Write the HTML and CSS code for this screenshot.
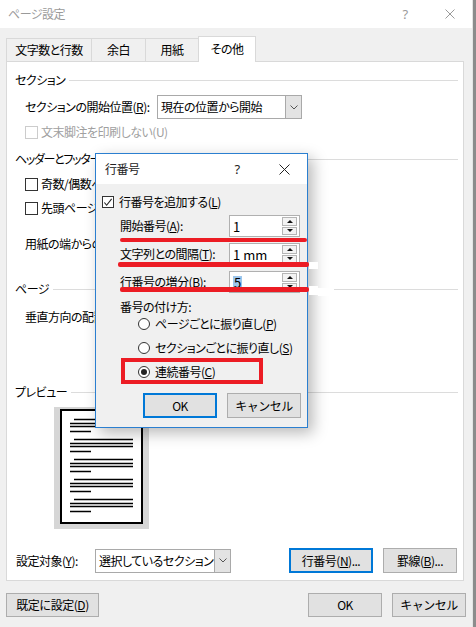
FILE: index.html
```html
<!DOCTYPE html>
<html lang="ja">
<head>
<meta charset="utf-8">
<title>ページ設定</title>
<link rel="stylesheet" href="styles.css">
</head>
<body>
<div class="screen">
  <div class="window">
    <div class="titlebar">
      <span class="title">ページ設定</span>
      <span class="tb-help">?</span>
      <svg class="tb-close" width="10" height="10" viewBox="0 0 10 10"><path d="M0.5 0.5 L9.5 9.5 M9.5 0.5 L0.5 9.5" stroke="#9a9a9a" stroke-width="1" fill="none"/></svg>
    </div>
    <div class="tabs">
      <div class="tab t1">文字数と行数</div>
      <div class="tab t2">余白</div>
      <div class="tab t3">用紙</div>
      <div class="tab t4 active">その他</div>
    </div>
    <div class="panel">
      <div class="group-title gt-section"><span>セクション</span></div>
      <div class="row row-start indent">
        <span class="label w-start">セクションの開始位置(<u>R</u>):</span>
        <div class="select sel-start">
          <span class="sel-text">現在の位置から開始</span>
          <span class="sel-btn"><svg width="8" height="5" viewBox="0 0 8 5"><path d="M0.5 0.5 L4 4 L7.5 0.5" stroke="#555" fill="none"/></svg></span>
        </div>
      </div>
      <div class="row row-cb1 indent disabled">
        <span class="cb cb-disabled"></span><span>文末脚注を印刷しない(U)</span>
      </div>
      <div class="group-title gt-header"><span class="tight">ヘッダーとフッター</span></div>
      <div class="row row-cb2 indent clip">
        <span class="cb"></span><span class="clip-text">奇数/偶数ページ別指定(O)</span>
      </div>
      <div class="row row-cb3 indent clip">
        <span class="cb"></span><span class="clip-text">先頭ページのみ別指定(P)</span>
      </div>
      <div class="row row-edge indent clip">
        <span class="clip-text">用紙の端からの距離:</span>
      </div>
      <div class="group-title gt-page"><span>ページ</span></div>
      <div class="row row-vert indent clip">
        <span class="clip-text">垂直方向の配置(V):</span>
      </div>
      <div class="group-title gt-preview"><span>プレビュー</span></div>
      <div class="preview">
        <svg width="95" height="122" viewBox="0 0 95 122">
          <rect x="7" y="3" width="81" height="113" fill="#fff" stroke="#000" stroke-width="2"/>
          <g stroke="#000" stroke-width="1.4">
            <path d="M20 12.5H79 M16 16.5H79 M16 19.5H79 M16 24.5H37"/>
            <path d="M20 32.5H79 M16 36.5H79 M16 39.5H79 M16 44.5H37"/>
            <path d="M20 52.5H79 M16 56.5H79 M16 59.5H79 M16 64.5H37"/>
            <path d="M20 72.5H79 M16 76.5H79 M16 79.5H79 M16 84.5H37"/>
            <path d="M20 92.5H79 M16 96.5H79 M16 99.5H79 M16 104.5H37"/>
          </g>
        </svg>
      </div>
      <div class="row row-target">
        <span class="label w-target">設定対象(<u>Y</u>):</span>
        <div class="select sel-target">
          <span class="sel-text">選択しているセクション</span>
          <span class="sel-btn"><svg width="8" height="5" viewBox="0 0 8 5"><path d="M0.5 0.5 L4 4 L7.5 0.5" stroke="#555" fill="none"/></svg></span>
        </div>
        <div class="btn-group">
          <button class="btn btn-default btn-lines">行番号(<u>N</u>)...</button>
          <button class="btn btn-border">罫線(<u>B</u>)...</button>
        </div>
      </div>
    </div>
    <div class="footer">
      <button class="btn btn-reset">既定に設定(<u>D</u>)</button>
      <div class="footer-right">
        <button class="btn btn-ok">OK</button>
        <button class="btn btn-cancel">キャンセル</button>
      </div>
    </div>
  </div>
  <div class="edge"></div>

  <div class="subdialog">
    <div class="sub-title">
      <span class="sub-name">行番号</span>
      <span class="sub-help">?</span>
      <svg class="sub-close" width="11" height="11" viewBox="0 0 11 11"><path d="M0.5 0.5 L10.5 10.5 M10.5 0.5 L0.5 10.5" stroke="#222" stroke-width="1" fill="none"/></svg>
    </div>
    <div class="sub-body">
      <div class="srow s-add">
        <span class="cb cb-checked"><svg width="11" height="11" viewBox="0 0 11 11"><path d="M1.5 5.5 L4 8.5 L9.5 1.5" stroke="#222" stroke-width="1.2" fill="none"/></svg></span>
        <span>行番号を追加する(<u>L</u>)</span>
      </div>
      <div class="srow spin-row s-r1">
        <span class="slabel">開始番号(<u>A</u>):</span>
        <div class="spin"><span class="spin-text">1</span><span class="arrows"><span class="arr up"></span><span class="arr down"></span></span></div>
      </div>
      <div class="srow spin-row s-r2">
        <span class="slabel">文字列との間隔(<u>T</u>):</span>
        <div class="spin"><span class="spin-text">1 mm</span><span class="arrows"><span class="arr up"></span><span class="arr down"></span></span></div>
      </div>
      <div class="srow spin-row s-r3">
        <span class="slabel">行番号の増分(<u>B</u>):</span>
        <div class="spin"><span class="spin-text"><span class="sel">5</span></span><span class="arrows"><span class="arr up"></span><span class="arr down"></span></span></div>
      </div>
      <div class="srow s-method"><span>番号の付け方:</span></div>
      <div class="srow radio-row s-p1"><span class="radio"></span><span>ページごとに振り直し(<u>P</u>)</span></div>
      <div class="srow radio-row s-p2"><span class="radio"></span><span>セクションごとに振り直し(<u>S</u>)</span></div>
      <div class="srow radio-row s-p3"><span class="radio on"></span><span>連続番号(<u>C</u>)</span></div>
      <div class="sub-buttons">
        <button class="btn btn-default sbtn">OK</button>
        <button class="btn sbtn">キャンセル</button>
      </div>
    </div>
  </div>

  <div class="red line1"></div>
  <div class="red line2"></div>
  <div class="white patch2"></div>
  <div class="red line3"></div>
  <div class="white patch3a"></div>
  <div class="white patch3b"></div>
  <div class="redbox"></div>
</div>
</body>
</html>
```

FILE: styles.css
```css
* { box-sizing: border-box; }
html, body { margin: 0; padding: 0; }
body {
  width: 476px;
  height: 627px;
  overflow: hidden;
  background: #f0f0f0;
  color: #000;
  font-family: "Noto Sans CJK JP", "Noto Sans", sans-serif;
  font-size: 12px;
  line-height: 1;
  letter-spacing: -0.5px;
  font-feature-settings: "palt";
}
u { text-decoration: underline; text-underline-offset: 1px; }
.screen { position: relative; display: flex; width: 476px; height: 627px; }
.window { width: 472px; height: 627px; background: #f0f0f0; display: flex; flex-direction: column; }
.edge { width: 4px; background: linear-gradient(to right, #e4e4e4 0 1px, #8c8c8c 1px); }

.titlebar { height: 28px; background: #fff; display: flex; align-items: center; padding: 0 17px 0 8px; color: #9a9a9a; }
.title { flex: 1; font-size: 12px; }
.tb-help { width: 8px; font-family: "Noto Sans", sans-serif; font-size: 13px; text-align: center; margin-right: 36px; }
.tb-close { display: block; }

.tabs { margin-top: 8px; height: 25px; padding-left: 6px; display: flex; align-items: flex-end; }
.tab { height: 23px; background: #f0f0f0; border: 1px solid #d9d9d9; border-bottom: none; display: flex; align-items: center; justify-content: center; font-size: 12px; }
.tab + .tab { margin-left: -1px; }
.t1 { width: 86px; }
.t2 { width: 55px; }
.t3 { width: 54px; }
.t4 { width: 58px; }
.tab.active { height: 26px; background: #fff; margin-bottom: -1px; position: relative; z-index: 1; padding-bottom: 2px; }

.panel { margin: 0 8px 0 6px; height: 520px; background: #fff; border: 1px solid #d9d9d9; padding: 0 5px 0 8px; display: flex; flex-direction: column; }
.group-title { height: 20px; display: flex; align-items: center; gap: 4px; flex: none; }
.group-title::after { content: ""; flex: 1; height: 1px; background: #dcdcdc; }
.tight { letter-spacing: -1.3px; white-space: nowrap; }
.gt-section { margin-top: 8px; }
.gt-header { margin-top: 8px; }
.gt-page { margin-top: 26px; }
.gt-preview { margin-top: 56px; }

.row { display: flex; align-items: center; flex: none; }
.indent { padding-left: 10px; }
.clip { width: 80px; overflow: hidden; white-space: nowrap; }
.clip-text { white-space: nowrap; flex: none; }
.row-start { margin-top: 5px; height: 24px; }
.row-cb1 { margin-top: 4px; height: 18px; }
.row-cb2 { margin-top: 6px; height: 18px; }
.row-cb3 { margin-top: 6px; height: 18px; }
.row-edge { margin-top: 18px; height: 18px; }
.row-vert { margin-top: 9px; height: 18px; }
.row-target { margin-top: 19px; height: 25px; }
.disabled { color: #a0a0a0; }
.label { flex: none; }
.w-start { width: 132px; }
.w-target { width: 80px; padding-left: 1px; }

.cb { width: 13px; height: 13px; border: 1px solid #333; background: #fff; margin-right: 3px; flex: none; display: flex; align-items: center; justify-content: center; }
.cb-disabled { border-color: #cccccc; }

.select { height: 24px; border: 1px solid #a9a9a9; background: #fff; display: flex; flex: none; }
.sel-start { width: 145px; }
.sel-target { width: 136px; }
.sel-text { flex: 1; display: flex; align-items: center; padding-left: 3px; white-space: nowrap; overflow: hidden; }
.sel-btn { width: 17px; background: #e3e3e3; box-shadow: inset 0 0 0 1px #a9a9a9; display: flex; align-items: center; justify-content: center; margin: -1px -1px -1px 0; }
.sel-btn svg { display: block; }

.preview { margin: 5px 0 0 39px; width: 95px; height: 122px; background: #d6d6d6; flex: none; }
.preview svg { display: block; }

.btn { font-family: inherit; font-size: 12px; letter-spacing: -0.5px; line-height: 1; color: #000; background: #e1e1e1; border: 1px solid #adadad; margin: 0; padding: 0; display: flex; align-items: center; justify-content: center; height: 25px; }
.btn-default { border: 2px solid #0078d7; }
.btn-group { margin-left: auto; margin-right: 1px; display: flex; gap: 10px; }
.btn-lines { width: 84px; }
.btn-border { width: 74px; }

.footer { margin-top: 12px; padding: 0 6px; display: flex; align-items: center; }
.footer .btn { height: 24px; }
.btn-reset { width: 93px; }
.footer-right { margin-left: auto; display: flex; gap: 10px; }
.btn-ok, .btn-cancel { width: 74px; }

/* sub dialog */
.subdialog { position: absolute; left: 95px; top: 153px; width: 213px; height: 275px; border: 1px solid #2b7fd0; background: #f0f0f0; box-shadow: 5px 5px 14px rgba(0,0,0,0.28); z-index: 5; display: flex; flex-direction: column; }
.sub-title { height: 30px; background: #fff; display: flex; align-items: center; padding: 0 17px 0 9px; color: #222; flex: none; }
.sub-name { flex: 1; font-size: 12px; }
.sub-help { width: 8px; text-align: center; font-family: "Noto Sans", sans-serif; font-size: 13px; margin-right: 38px; }
.sub-close { display: block; }
.sub-body { padding: 0 6px; display: flex; flex-direction: column; }
.srow { display: flex; align-items: center; flex: none; }
.s-add { margin-top: 9px; height: 18px; }
.s-add .cb { width: 12px; height: 12px; margin-right: 5px; }
.cb-checked svg { display: block; }
.spin-row { height: 22px; padding-left: 18px; }
.s-r1 { margin-top: 4px; }
.s-r2 { margin-top: 6px; }
.s-r3 { margin-top: 6px; }
.slabel { width: 109px; flex: none; white-space: nowrap; }
.spin { width: 71px; height: 22px; border: 1px solid #b0b0b0; background: #fff; display: flex; }
.spin-text { flex: 1; display: flex; align-items: center; padding-left: 3px; font-size: 13px; letter-spacing: 0; }
.sel { background: #9ec6ec; padding: 0 1px; }
.arrows { width: 15px; display: flex; flex-direction: column; gap: 1px; margin: 1px 2px 1px 0; }
.arr { flex: 1; border: 1px solid #b5b5b5; background: #f3f3f3; display: flex; align-items: center; justify-content: center; }
.arr::before { content: ""; width: 0; height: 0; border-left: 3px solid transparent; border-right: 3px solid transparent; }
.arr.up::before { border-bottom: 3px solid #111; }
.arr.down::before { border-top: 3px solid #111; }
.s-method { margin-top: 6px; height: 16px; padding-left: 18px; }
.radio-row { height: 18px; padding-left: 36px; margin-top: 6px; }
.s-p1 { margin-top: 0; }
.radio { width: 12px; height: 12px; border: 1px solid #333; border-radius: 50%; background: #fff; margin-right: 5px; flex: none; display: flex; align-items: center; justify-content: center; }
.radio.on::before { content: ""; width: 6px; height: 6px; border-radius: 50%; background: #222; }
.sub-buttons { margin-top: 12px; display: flex; justify-content: flex-end; gap: 10px; }
.sbtn { width: 74px; height: 25px; }

/* annotations */
.red { position: absolute; background: #ec1c24; border-radius: 2px; z-index: 10; }
.white { position: absolute; background: #fff; z-index: 10; }
.line1 { left: 120px; top: 238px; width: 187px; height: 4px; }
.line2 { left: 118px; top: 262px; width: 191px; height: 5px; }
.patch2 { left: 309px; top: 262px; width: 9px; height: 7px; }
.line3 { left: 120px; top: 287px; width: 189px; height: 5px; }
.patch3a { left: 309px; top: 286px; width: 9px; height: 9px; }
.patch3b { left: 318px; top: 288px; width: 16px; height: 8px; }
.redbox { position: absolute; left: 121px; top: 358px; width: 142px; height: 26px; border: 4px solid #ec1c24; z-index: 10; }
```
